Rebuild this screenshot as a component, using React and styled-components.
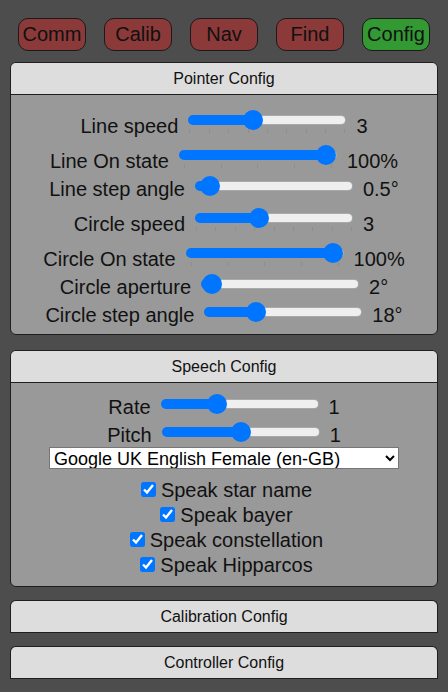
import React from "react";
import styled, { createGlobalStyle } from "styled-components";

const Global = createGlobalStyle`
  html, body { margin: 0; padding: 0; }
  body {
    background: #4d4d4d;
    font-family: "Liberation Sans", Arial, sans-serif;
    color: #111;
  }
`;

const Nav = styled.nav`
  display: flex;
  justify-content: space-evenly;
  padding: 18px 0 11px;
`;

const NavButton = styled.button`
  width: 68px;
  height: 33px;
  padding: 0;
  border: 1px solid #1a1a1a;
  border-radius: 10px;
  background: ${(p) => (p.$active ? "#339933" : "#8b3939")};
  color: #111;
  font-family: "Liberation Sans", Arial, sans-serif;
  font-size: 20px;
`;

const Panel = styled.section`
  margin: 0 10px ${(p) => p.$gap}px;
  border: 1px solid #1e1e1e;
  border-bottom-width: ${(p) => (p.$open ? "1px" : "0")};
  border-radius: ${(p) => (p.$open ? "6px" : "6px 6px 0 0")};
  overflow: hidden;
  background: #999999;
`;

const Header = styled.div`
  height: 31px;
  line-height: 31px;
  text-align: center;
  font-size: 16px;
  background: #dddddd;
  border-bottom: 1px solid #1e1e1e;
`;

const Body = styled.div`
  padding: ${(p) => p.$pad};
  font-size: 20px;
  display: flex;
  flex-direction: column;
  align-items: center;
`;

const Row = styled.div`
  display: flex;
  justify-content: center;
  align-items: ${(p) => (p.$tall ? "flex-end" : "center")};
  gap: 10px;
  height: ${(p) => (p.$tall ? 35 : 28)}px;
  white-space: nowrap;
`;

const Text = styled.span`
  line-height: 28px;
`;

const SliderBox = styled.div`
  display: flex;
  flex-direction: column;
  align-self: ${(p) => (p.$tall ? "flex-start" : "center")};
  margin: ${(p) => (p.$tall ? "5px 0 0" : "0 0 6px")};
`;

const Range = styled.input.attrs({ type: "range" })`
  -webkit-appearance: none;
  appearance: none;
  display: block;
  width: 158px;
  height: 20px;
  margin: 0;
  padding: 0;
  background: transparent;

  &::-webkit-slider-runnable-track {
    box-sizing: border-box;
    height: 10px;
    border-radius: 5px;
    border: 1px solid transparent;
    background:
      linear-gradient(to right, #0075ff var(--p), #efefef var(--p)) padding-box,
      linear-gradient(to right, #0075ff var(--p), #a9a9a9 var(--p)) border-box;
  }
  &::-webkit-slider-thumb {
    -webkit-appearance: none;
    width: 20px;
    height: 20px;
    margin-top: -6px;
    border: 0;
    border-radius: 50%;
    background: #0075ff;
  }
`;

const Ticks = styled.div`
  display: flex;
  justify-content: space-between;
  height: 4px;
  margin-top: -1px;
  padding: 0 ${(p) => p.$inset}px;
`;

const Tick = styled.i`
  width: 1px;
  height: 4px;
  background: rgba(0, 0, 0, 0.07);
`;

const Select = styled.select`
  box-sizing: border-box;
  width: 350px;
  height: 22px;
  margin: -2px 0 9px;
  padding: 0;
  font-family: "Liberation Sans", Arial, sans-serif;
  font-size: 18px;
  background: #fff;
  border: 1px solid #767676;
  border-radius: 0;
  color: #000;
`;

const Check = styled.label`
  display: block;
  height: 25px;
  line-height: 25px;
  padding-left: 5px;
  white-space: nowrap;
`;

const Box = styled.input.attrs({ type: "checkbox" })`
  width: 15px;
  height: 15px;
  margin: 0 5px 0 0;
  vertical-align: baseline;
`;

function Slider({ label, min, max, step, value, unit = "", ticks, inset = 0 }) {
  const frac = (value - min) / (max - min);
  const pct = ((10 + frac * 138) / 158) * 100;
  const tall = Boolean(ticks);
  return (
    <Row $tall={tall}>
      <Text>{label}</Text>
      <SliderBox $tall={tall}>
        <Range
          min={min}
          max={max}
          step={step}
          defaultValue={value}
          aria-label={label}
          style={{ "--p": `${pct}%` }}
        />
        {tall && (
          <Ticks $inset={inset}>
            {Array.from({ length: ticks }, (_, i) => (
              <Tick key={i} />
            ))}
          </Ticks>
        )}
      </SliderBox>
      <Text>
        {value}
        {unit}
      </Text>
    </Row>
  );
}

export default function App() {
  const tabs = ["Comm", "Calib", "Nav", "Find", "Config"];
  return (
    <>
      <Global />
      <Nav>
        {tabs.map((t) => (
          <NavButton key={t} $active={t === "Config"}>
            {t}
          </NavButton>
        ))}
      </Nav>

      <Panel $open $gap={15}>
        <Header>Pointer Config</Header>
        <Body $pad="10px 0 5px">
          <Slider label="Line speed" min={1} max={6.1} step={0.1} value={3} ticks={9} inset={1} />
          <Slider label="Line On state" min={0} max={100} step={1} value={100} unit="%" ticks={5} inset={5} />
          <Slider label="Line step angle" min={0} max={15} step={0.5} value={0.5} unit="°" />
          <Slider label="Circle speed" min={1} max={6.1} step={0.1} value={3} ticks={9} inset={1} />
          <Slider label="Circle On state" min={0} max={100} step={1} value={100} unit="%" ticks={5} inset={5} />
          <Slider label="Circle aperture" min={2} max={30} step={1} value={2} unit="°" />
          <Slider label="Circle step angle" min={0} max={60} step={1} value={18} unit="°" />
        </Body>
      </Panel>

      <Panel $open $gap={13}>
        <Header>Speech Config</Header>
        <Body $pad="10px 0 8px">
          <Slider label="Rate" min={0.5} max={2} step={0.1} value={1} />
          <Slider label="Pitch" min={0} max={2} step={0.1} value={1} />
          <Select defaultValue="uk-f" aria-label="Voice">
            <option value="uk-f">Google UK English Female (en-GB)</option>
          </Select>
          <Check><Box defaultChecked />Speak star name</Check>
          <Check><Box defaultChecked />Speak bayer</Check>
          <Check><Box defaultChecked />Speak constellation</Check>
          <Check><Box defaultChecked />Speak Hipparcos</Check>
        </Body>
      </Panel>

      <Panel $gap={13}>
        <Header>Calibration Config</Header>
      </Panel>
      <Panel $gap={13}>
        <Header>Controller Config</Header>
      </Panel>
    </>
  );
}
